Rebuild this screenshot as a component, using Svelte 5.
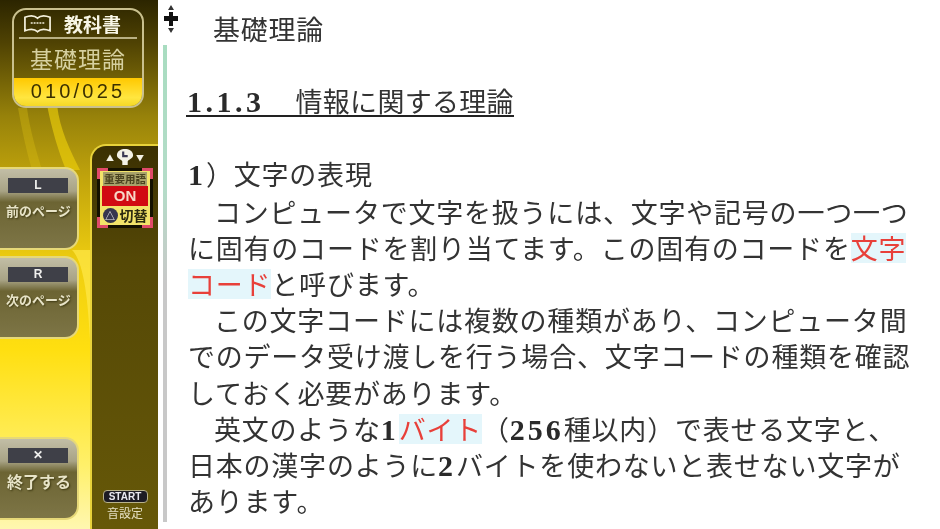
<script>
  const lines = [
    { indent: true, parts: [{ t: 'コンピュータで文字を扱うには、文字や記号の一つ一つ' }] },
    { parts: [{ t: 'に固有のコードを割り当てます。この固有のコードを' }, { t: '文字', key: true }] },
    { parts: [{ t: 'コード', key: true }, { t: 'と呼びます。' }] },
    { indent: true, parts: [{ t: 'この文字コードには複数の種類があり、コンピュータ間' }] },
    { parts: [{ t: 'でのデータ受け渡しを行う場合、文字コードの種類を確認' }] },
    { parts: [{ t: 'しておく必要があります。' }] },
    {
      indent: true,
      parts: [
        { t: '英文のような' },
        { t: '1', num: true },
        { t: 'バイト', key: true },
        { t: '（' },
        { t: '256', num: true },
        { t: '種以内）で表せる文字と、' }
      ]
    },
    { parts: [{ t: '日本の漢字のように' }, { t: '2', num: true }, { t: 'バイトを使わないと表せない文字が' }] },
    { parts: [{ t: 'あります。' }] }
  ];
</script>

<div class="screen">
  <aside class="side">
    <svg class="swoosh" viewBox="0 0 158 529" aria-hidden="true">
      <path d="M47 105 C52 130 58 150 66 170 L80 170 C70 150 60 130 57 105 Z" fill="#f2d40a" opacity="0.6" />
      <path d="M18 108 C22 130 26 150 32 170 L42 170 C36 150 30 130 27 108 Z" fill="#dcc010" opacity="0.35" />
      <path d="M72 250 C84 262 88 300 90 340 L90 250 Z" fill="#ffe84a" opacity="0.7" />
    </svg>

    <div class="book">
      <div class="book-head">
        <svg class="book-icon" viewBox="0 0 30 20" aria-hidden="true">
          <path d="M2 3 C7 1 12 1 15 4 C18 1 23 1 28 3 V17 C23 15 18 15 15 18 C12 15 7 15 2 17 Z" fill="none" stroke="#f4f0dc" stroke-width="1.8" />
          <path d="M8 9 H22" stroke="#f4f0dc" stroke-width="1.6" stroke-dasharray="2 1" />
        </svg>
        <b>教科書</b>
      </div>
      <div class="book-title">基礎理論</div>
      <div class="book-count">010/025</div>
    </div>

    <div class="lower">
      <div class="buttons">
        <div class="btn first"><span class="key">L</span><span class="label small">前のページ</span></div>
        <div class="btn"><span class="key">R</span><span class="label small">次のページ</span></div>
        <div class="btn last"><span class="key">✕</span><span class="label">終了する</span></div>
      </div>

      <div class="panel">
        <div class="hint">
          <span class="tri">▲</span>
          <svg class="bulb" viewBox="0 0 20 20" aria-hidden="true">
            <path d="M1 8 C1 3 6 1 10 1 C14 1 19 3 19 8 C19 12 13 13 13 15 V19 H7 V15 C7 13 1 12 1 8 Z" fill="#f4f2e6" />
            <path d="M8 4 V9 H13" fill="none" stroke="#3c3a55" stroke-width="2.4" />
          </svg>
          <span class="tri">▼</span>
        </div>
        <div class="toggle">
          <span class="toggle-title">重要用語</span>
          <span class="toggle-on">ON</span>
          <span class="toggle-switch"><i>△</i>切替</span>
          <span class="corner tl"></span><span class="corner tr"></span>
          <span class="corner bl"></span><span class="corner br"></span>
        </div>
        <div class="sound">
          <span class="start">START</span>
          <span class="sound-label">音設定</span>
        </div>
      </div>
    </div>
  </aside>

  <div class="rail">
    <svg class="move" viewBox="0 0 16 30" aria-hidden="true">
      <path d="M8 1 L11 6 H5 Z M8 29 L11 24 H5 Z" fill="#333" />
      <path d="M6 8 H10 V12 H15 V17 H10 V22 H6 V17 H1 V12 H6 Z" fill="#111" />
    </svg>
    <div class="rail-line"></div>
  </div>

  <main class="page">
    <div class="chapter">基礎理論</div>
    <h2><span class="num">1.1.3</span><span class="head-text">情報に関する理論</span></h2>
    <h3><span class="num">1</span>）文字の表現</h3>
    {#each lines as line}
      <p class:indent={line.indent}>
        {#each line.parts as part}<span class:num={part.num} class:key-term={part.key}>{part.t}</span>{/each}
      </p>
    {/each}
  </main>
</div>

<style>
  :global(body) {
    margin: 0;
    background: #fff;
  }

  .screen {
    width: 940px;
    height: 529px;
    display: flex;
    overflow: hidden;
    background: #fff;
    font-family: "Noto Sans CJK JP", "Noto Sans", sans-serif;
  }

  .side {
    position: relative;
    width: 158px;
    flex-shrink: 0;
    display: flex;
    flex-direction: column;
    background: linear-gradient(180deg, #2c2500 0%, #4f4203 8%, #97820a 22%, #c2a50c 34%, #efce10 50%, #ffdf10 66%, #fff06a 88%, #fff7b0 100%);
    filter: blur(0.5px);
  }

  .swoosh {
    position: absolute;
    inset: 0;
    width: 158px;
    height: 529px;
  }

  .book {
    position: relative;
    margin: 8px 14px 0 12px;
    height: 100px;
    box-sizing: border-box;
    border: 2px solid #c9c08e;
    border-radius: 14px;
    overflow: hidden;
    display: flex;
    flex-direction: column;
  }

  .book-head {
    display: flex;
    align-items: center;
    gap: 12px;
    height: 27px;
    flex-shrink: 0;
    margin: 0 5px;
    padding-left: 4px;
    border-bottom: 2px solid #b9b083;
    color: #f8f6e6;
    font-size: 19px;
  }

  .book-icon {
    width: 29px;
    height: 20px;
  }

  .book-title {
    flex: 1;
    text-align: center;
    color: #d6d0a0;
    font-size: 23px;
    line-height: 38px;
    letter-spacing: 1px;
  }

  .book-count {
    height: 28px;
    line-height: 26px;
    text-align: center;
    font-family: "Liberation Sans", sans-serif;
    font-size: 20px;
    letter-spacing: 3.2px;
    color: #3b3000;
    background: linear-gradient(180deg, #ffc800, #ffe640 70%, #f5d826);
  }

  .lower {
    position: relative;
    flex: 1;
    display: flex;
    margin-top: 36px;
    min-height: 0;
  }

  .buttons {
    width: 79px;
    margin-right: 11px;
    display: flex;
    flex-direction: column;
  }

  .btn {
    height: 83px;
    box-sizing: border-box;
    margin-top: 6px;
    padding: 9px 0 0 8px;
    border: 2px solid #e6d878;
    border-left: 0;
    border-radius: 0 14px 14px 0;
    background: linear-gradient(180deg, #c2bea6 0%, #a8a385 28%, #6c6433 42%, #7d7546 100%);
    display: flex;
    flex-direction: column;
  }

  .btn.first {
    margin-top: 23px;
  }

  .btn.last {
    margin-top: 98px;
  }

  .key {
    width: 60px;
    height: 15px;
    line-height: 15px;
    text-align: center;
    background: #3f4048;
    color: #f0f0ee;
    font-family: "Liberation Sans", sans-serif;
    font-weight: 700;
    font-size: 12px;
  }

  .label {
    margin: 7px 0 0 -1px;
    color: #e8e4c8;
    font-size: 16px;
    font-weight: 700;
    line-height: 22px;
    white-space: nowrap;
    text-shadow: 1px 1px 2px #3d3810;
  }

  .label.small {
    font-size: 13px;
    margin-left: -2px;
  }

  .panel {
    flex: 1;
    display: flex;
    flex-direction: column;
    align-items: center;
    border-radius: 16px 0 0 0;
    border-top: 2px solid #e8d23a;
    border-left: 2px solid #e8d23a;
    background: linear-gradient(180deg, #3b3002 0%, #554806 30%, #665808 100%);
  }

  .hint {
    height: 22px;
    display: flex;
    align-items: center;
    gap: 2px;
    color: #f4f2e6;
    font-size: 8px;
  }

  .bulb {
    width: 18px;
    height: 18px;
  }

  .toggle {
    position: relative;
    width: 56px;
    height: 60px;
    padding: 1px 3px;
    box-sizing: border-box;
    background: #f2e36a;
    border: 3px solid #141100;
    display: flex;
    flex-direction: column;
    align-items: center;
    color: #2c2a10;
    font-weight: 700;
  }

  .toggle-title {
    font-size: 10.5px;
    line-height: 14px;
    white-space: nowrap;
    color: #4a4420;
    background: #a8a26a;
    width: 100%;
    text-align: center;
  }

  .toggle-on {
    width: 46px;
    height: 20px;
    line-height: 20px;
    text-align: center;
    background: #d10a12;
    color: #f7d8c8;
    font-family: "Liberation Sans", sans-serif;
    font-size: 15px;
  }

  .toggle-switch {
    display: flex;
    align-items: center;
    gap: 2px;
    font-size: 14px;
    line-height: 19px;
    white-space: nowrap;
  }

  .toggle-switch i {
    width: 15px;
    height: 15px;
    border-radius: 50%;
    background: #36364e;
    color: #e9e9e9;
    font-style: normal;
    font-size: 10px;
    line-height: 15px;
    text-align: center;
  }

  .corner {
    position: absolute;
    width: 8px;
    height: 8px;
    border: 3px solid #e04a6a;
  }

  .tl { top: -3px; left: -3px; border-right: 0; border-bottom: 0; }
  .tr { top: -3px; right: -3px; border-left: 0; border-bottom: 0; }
  .bl { bottom: -3px; left: -3px; border-right: 0; border-top: 0; }
  .br { bottom: -3px; right: -3px; border-left: 0; border-top: 0; }

  .sound {
    margin-top: auto;
    margin-bottom: 9px;
    display: flex;
    flex-direction: column;
    align-items: center;
  }

  .start {
    width: 43px;
    height: 11px;
    line-height: 11px;
    border-radius: 4px;
    border: 1px solid #b8b28a;
    background: #1d1c24;
    color: #e8e8f0;
    font-family: "Liberation Sans", sans-serif;
    font-size: 10px;
    font-weight: 700;
    text-align: center;
  }

  .sound-label {
    margin-top: 2px;
    color: #e4dfc0;
    font-size: 12px;
    line-height: 15px;
  }

  .rail {
    position: relative;
    width: 28px;
    flex-shrink: 0;
  }

  .move {
    position: absolute;
    top: 4px;
    left: 5px;
    width: 16px;
    height: 30px;
  }

  .rail-line {
    position: absolute;
    top: 45px;
    bottom: 7px;
    left: 5px;
    width: 4px;
    background: linear-gradient(180deg, #a8dcc0 0%, #b4dcc8 30%, #c8c8c8 50%, #c8c8c8 100%);
  }

  .page {
    flex: 1;
    padding-top: 11px;
    color: #333;
    font-size: 27px;
    letter-spacing: 0.78px;
    line-height: 36.2px;
    white-space: nowrap;
    filter: blur(0.3px);
  }

  .chapter {
    height: 36px;
    margin-left: 27px;
  }

  h2 {
    display: inline-block;
    margin: 37px 0 0;
    padding: 0 0 0 1px;
    height: 31px;
    font: inherit;
    letter-spacing: 0.3px;
    border-bottom: 2px solid #222;
    line-height: 34px;
  }

  h2 .num {
    letter-spacing: 3.5px;
  }

  .head-text {
    margin-left: 31px;
  }

  h3 {
    height: 37.5px;
    margin: 37px 0 0 2px;
    font: inherit;
  }

  p {
    height: 36.2px;
    margin: 0 0 0 2px;
  }

  p.indent {
    padding-left: 26px;
  }

  .num {
    font-family: "Liberation Serif", serif;
    font-size: 30px;
    font-weight: 700;
    letter-spacing: 3px;
    color: #2a2a2a;
  }

  .key-term {
    display: inline-block;
    line-height: 30px;
    color: #e8403a;
    background: #e4f6fb;
  }
</style>
